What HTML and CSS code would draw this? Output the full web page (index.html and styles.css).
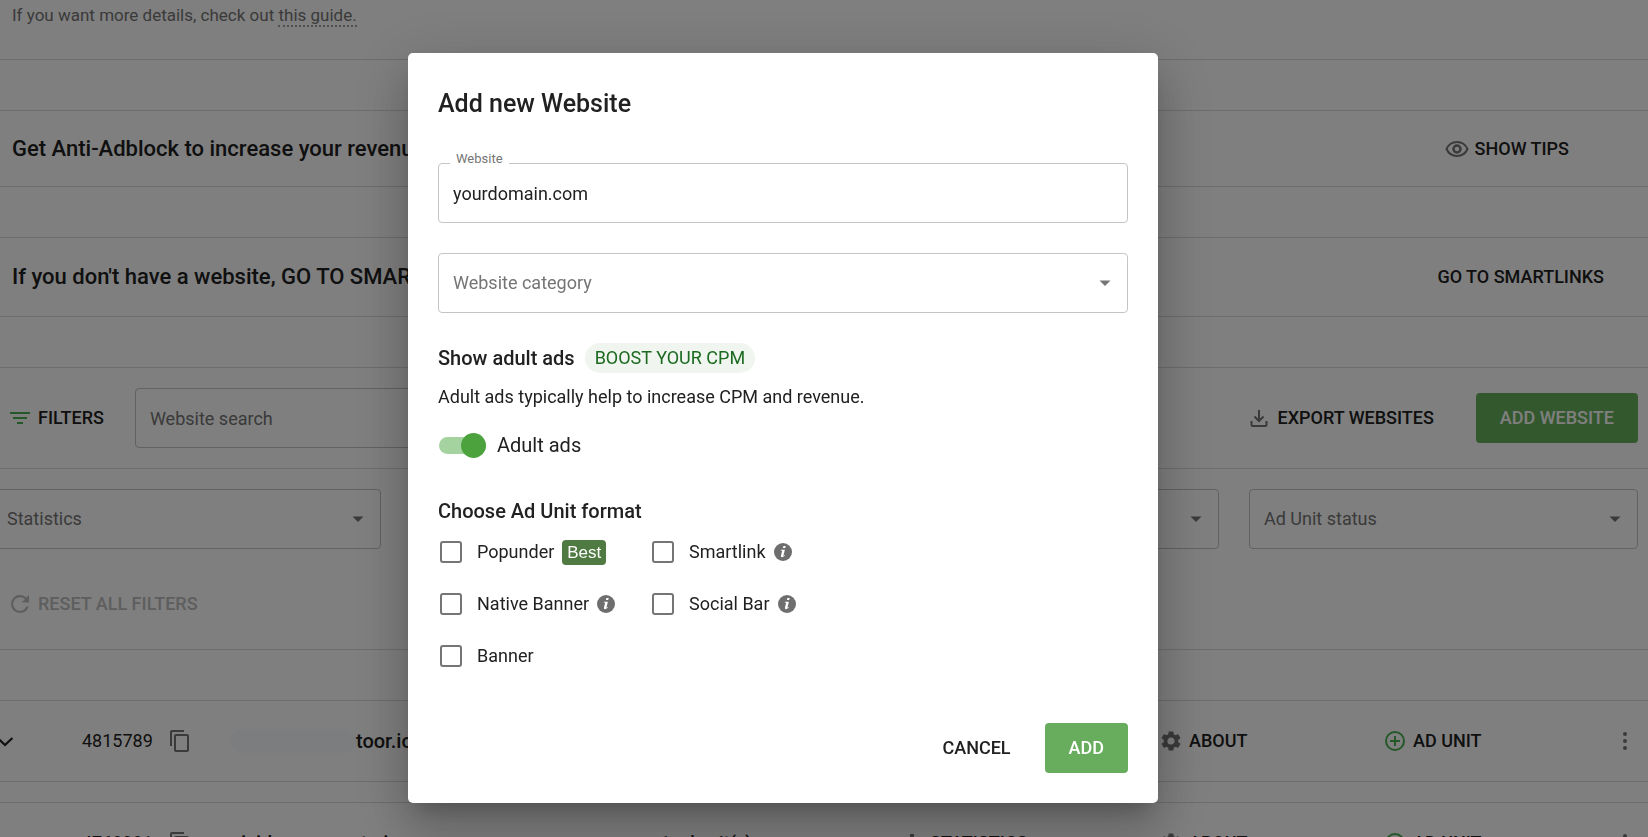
FILE: index.html
```html
<!DOCTYPE html>
<html lang="en">
<head>
  <meta charset="UTF-8" />
  <meta name="viewport" content="width=device-width, initial-scale=1.0"/>
  <title>Websites</title>
  <link rel="stylesheet" href="styles.css">
</head>
<body>
  <!-- shared icons -->
  <svg class="sprite" aria-hidden="true">
    <symbol id="arrow" viewBox="0 0 24 24"><path d="M6.500 9.500l5.500 5.500 5.500-5.500z"/></symbol>
    <symbol id="copy" viewBox="0 0 24 24"><path d="M16 1H4a2 2 0 0 0-2 2v14h2V3h12V1zm3 4H8a2 2 0 0 0-2 2v14a2 2 0 0 0 2 2h11a2 2 0 0 0 2-2V7a2 2 0 0 0-2-2zm0 16H8V7h11v14z"/></symbol>
    <symbol id="gear" viewBox="0 0 24 24"><path d="M19.14 12.94c.04-.3.06-.61.06-.94 0-.32-.02-.64-.07-.94l2.03-1.58a.49.49 0 0 0 .12-.61l-1.92-3.32a.488.488 0 0 0-.59-.22l-2.39.96c-.5-.38-1.03-.7-1.62-.94l-.36-2.54a.484.484 0 0 0-.48-.41h-3.84c-.24 0-.43.17-.47.41l-.36 2.54c-.59.24-1.13.57-1.62.94l-2.39-.96c-.22-.08-.47 0-.59.22L2.74 8.87c-.12.21-.08.47.12.61l2.03 1.58c-.05.3-.09.63-.09.94s.02.64.07.94l-2.03 1.58a.49.49 0 0 0-.12.61l1.92 3.32c.12.22.37.29.59.22l2.39-.96c.5.38 1.03.7 1.62.94l.36 2.54c.05.24.24.41.48.41h3.84c.24 0 .44-.17.47-.41l.36-2.54c.59-.24 1.13-.56 1.62-.94l2.39.96c.22.08.47 0 .59-.22l1.92-3.32c.12-.22.07-.47-.12-.61l-2.01-1.58zM12 15.6A3.61 3.61 0 0 1 8.4 12c0-1.98 1.62-3.6 3.6-3.6s3.6 1.62 3.6 3.6-1.62 3.6-3.6 3.6z"/></symbol>
    <symbol id="plus" viewBox="0 0 24 24"><path d="M13 7h-2v4H7v2h4v4h2v-4h4v-2h-4V7zm-1-5a10 10 0 1 0 0 20 10 10 0 0 0 0-20zm0 18a8 8 0 1 1 0-16 8 8 0 0 1 0 16z"/></symbol>
    <symbol id="dots" viewBox="0 0 24 24"><circle cx="12" cy="5" r="2"/><circle cx="12" cy="12" r="2"/><circle cx="12" cy="19" r="2"/></symbol>
    <symbol id="chevron" viewBox="0 0 24 24"><path d="M6.300 8.200L13 14.500l6.700-6.300 1.500 1.600-8.200 7.800-8.200-7.800z"/></symbol>
    <symbol id="bars" viewBox="0 0 24 24"><path d="M4 10h4v11H4zM10 3h4v18h-4zM16 13h4v8h-4z"/></symbol>
    <symbol id="info" viewBox="0 0 18 18"><circle cx="9" cy="9" r="9"/><path class="mark" d="M9.4 2.9h2.3l-.5 2.2H8.9zM6.9 6.7h4l-1.4 5.6c-.1.5.3.5 1.2-.2l.3.5c-1.3 1.5-4.6 2.6-4-.1l1.1-4.4c.1-.5-.2-.6-1.4-.7z"/></symbol>
  </svg>

  <main class="page">
    <section class="panel intro">
      <p>If you want more details, check out <a href="#guide">this guide.</a></p>
    </section>

    <section class="panel banner">
      <h2>Get Anti-Adblock to increase your revenue</h2>
      <button class="text-btn tips" type="button">
        <svg class="icon" viewBox="0 0 24 24" fill="none" stroke="currentColor" stroke-width="2"><path d="M1.500 12C3.500 7.500 7.500 5 12 5s8.500 2.500 10.500 7c-2 4.500-6 7-10.500 7S3.500 16.500 1.500 12z"/><circle cx="12" cy="12" r="3.500" stroke-width="2.500"/></svg>
        SHOW TIPS
      </button>
    </section>

    <section class="panel banner smart">
      <h2>If you don't have a website, GO TO SMARTLINKS</h2>
      <a class="text-btn" href="#smartlinks">GO TO SMARTLINKS</a>
    </section>

    <section class="panel">
      <div class="toolbar">
        <button class="text-btn" type="button">
          <svg class="icon green" viewBox="0 0 24 24"><path d="M2 6h20v2H2zM5 11h14v2H5zM9 16h6v2H9z"/></svg>
          FILTERS
        </button>
        <input class="field search" type="text" placeholder="Website search" aria-label="Website search">
        <button class="text-btn export" type="button">
          <svg class="icon" viewBox="0 0 24 24" fill="none" stroke="currentColor" stroke-width="2"><path d="M12 4v11M7.500 10.500l4.500 4.500 4.500-4.500M4.500 15v3.500q0 1.500 1.500 1.500h12q1.500 0 1.500-1.500V15"/></svg>
          EXPORT WEBSITES
        </button>
        <button class="green-btn" type="button">ADD WEBSITE</button>
      </div>
      <div class="filters">
        <div class="select">
          <select class="field" aria-label="Statistics"><option>Statistics</option></select>
          <svg class="icon"><use href="#arrow"/></svg>
        </div>
        <div class="select">
          <select class="field" aria-label="Website status"><option>Website status</option></select>
          <svg class="icon"><use href="#arrow"/></svg>
        </div>
        <div class="select">
          <select class="field" aria-label="Website category"><option>Website category</option></select>
          <svg class="icon"><use href="#arrow"/></svg>
        </div>
        <div class="select">
          <select class="field" aria-label="Ad Unit status"><option>Ad Unit status</option></select>
          <svg class="icon"><use href="#arrow"/></svg>
        </div>
      </div>
      <button class="text-btn reset" type="button" disabled>
        <svg class="icon" viewBox="0 0 24 24"><path d="M18.400 5.600A9 9 0 1 0 20.700 14.500h-2.400A6.800 6.800 0 1 1 16.800 7.200L13.500 10.500H21V3z"/></svg>
        RESET ALL FILTERS
      </button>
    </section>

    <table class="sites">
      <colgroup>
        <col class="c-open"><col class="c-id"><col class="c-name"><col class="c-units"><col class="c-stats"><col class="c-about"><col class="c-add"><col class="c-more">
      </colgroup>
      <tbody>
        <tr>
          <td><button class="text-btn" type="button" aria-label="Expand"><svg class="icon dark"><use href="#chevron"/></svg></button></td>
          <td><div class="site-id">4815789 <button class="text-btn" type="button" aria-label="Copy"><svg class="icon"><use href="#copy"/></svg></button></div></td>
          <td><div class="site-name"><span class="smudge"></span>toor.io</div></td>
          <td></td>
          <td></td>
          <td><button class="text-btn" type="button"><svg class="icon"><use href="#gear"/></svg>ABOUT</button></td>
          <td><button class="text-btn" type="button"><svg class="icon green"><use href="#plus"/></svg>AD UNIT</button></td>
          <td><button class="text-btn" type="button" aria-label="More"><svg class="icon"><use href="#dots"/></svg></button></td>
        </tr>
        <tr class="gap"><td colspan="8"></td></tr>
        <tr>
          <td><button class="text-btn" type="button" aria-label="Expand"><svg class="icon dark"><use href="#chevron"/></svg></button></td>
          <td><div class="site-id">4768981 <button class="text-btn" type="button" aria-label="Copy"><svg class="icon"><use href="#copy"/></svg></button></div></td>
          <td><div class="site-name">vividmovements.io</div></td>
          <td class="units">1 ad unit(s)</td>
          <td><button class="text-btn" type="button"><svg class="icon"><use href="#bars"/></svg>STATISTICS</button></td>
          <td><button class="text-btn" type="button"><svg class="icon"><use href="#gear"/></svg>ABOUT</button></td>
          <td><button class="text-btn" type="button"><svg class="icon green"><use href="#plus"/></svg>AD UNIT</button></td>
          <td><button class="text-btn" type="button" aria-label="More"><svg class="icon"><use href="#dots"/></svg></button></td>
        </tr>
      </tbody>
    </table>
  </main>

  <div class="overlay">
    <form class="modal" role="dialog" aria-labelledby="modalTitle">
      <h1 id="modalTitle">Add new Website</h1>

      <div class="input-box">
        <label for="website">Website</label>
        <input class="field" id="website" type="text" value="yourdomain.com">
      </div>

      <div class="select">
        <select class="field" aria-label="Website category"><option>Website category</option></select>
        <svg class="icon"><use href="#arrow"/></svg>
      </div>

      <div class="adult-head">
        <h3>Show adult ads</h3>
        <span class="chip">BOOST YOUR CPM</span>
      </div>
      <p>Adult ads typically help to increase CPM and revenue.</p>
      <label class="switch"><input type="checkbox" checked>Adult ads</label>

      <h3>Choose Ad Unit format</h3>
      <div class="formats">
        <div class="format"><label><input type="checkbox">Popunder</label><span class="best">Best</span></div>
        <div class="format"><label><input type="checkbox">Smartlink</label><svg class="info"><use href="#info"/></svg></div>
        <div class="format"><label><input type="checkbox">Native Banner</label><svg class="info"><use href="#info"/></svg></div>
        <div class="format"><label><input type="checkbox">Social Bar</label><svg class="info"><use href="#info"/></svg></div>
        <div class="format"><label><input type="checkbox">Banner</label></div>
      </div>

      <div class="actions">
        <button class="text-btn" type="button">CANCEL</button>
        <button class="green-btn" type="submit">ADD</button>
      </div>
    </form>
  </div>
</body>
</html>
```

FILE: styles.css
```css
* {
  box-sizing: border-box;
}

body {
  margin: 0;
  height: 100vh;
  overflow: hidden;
  background: #fff;
  color: #212121;
  font-family: Roboto, sans-serif;
  font-size: 18px;
  line-height: 26px;
}

h1, h2, h3, p {
  margin: 0;
  font-weight: 500;
}

p {
  font-weight: 400;
}

button, input, select {
  font: inherit;
  color: inherit;
}

.sprite {
  position: absolute;
  width: 0;
  height: 0;
}

.icon {
  flex: none;
  width: 24px;
  height: 24px;
  color: #757575;
  fill: #757575;
}

.icon[fill="none"] {
  fill: none;
}

.icon.green {
  fill: #4caf50;
}

.icon.dark {
  fill: #212121;
}

/* page behind the dialog */
.page {
  height: 100vh;
  overflow: hidden;
}

.panel {
  margin-bottom: 50px;
  border: solid #dadada;
  border-width: 1px 0;
}

.intro {
  height: 60px;
  border-top: none;
  padding: 2px 12px;
  color: #757575;
}

.intro p {
  font-size: 17px;
}

.intro a {
  color: inherit;
  text-decoration: none;
  border-bottom: 2px dotted #a0a0a0;
}

.banner {
  display: flex;
  align-items: center;
  justify-content: space-between;
  min-height: 77px;
  padding: 0 44px 0 12px;
}

.banner.smart {
  min-height: 80px;
}

.banner h2 {
  font-size: 22px;
}

.tips {
  margin-right: 35px;
}

.text-btn, .green-btn {
  display: inline-flex;
  align-items: center;
  gap: 6px;
  padding: 0;
  border: none;
  background: none;
  font-weight: 500;
  color: #212121;
  text-decoration: none;
  white-space: nowrap;
  cursor: pointer;
}

.green-btn {
  height: 50px;
  padding: 0 24px;
  border-radius: 4px;
  background: #68ad5e;
  color: #fff;
}

.toolbar {
  display: flex;
  align-items: center;
  padding: 20px 10px 20px 8px;
  border-bottom: 1px solid #dadada;
}

.toolbar .search {
  flex: 1;
  margin: 0 92px 0 31px;
}

.toolbar .export {
  margin-right: 42px;
}

.toolbar .green-btn {
  background: #66b05a;
}

.field {
  display: block;
  width: 100%;
  height: 60px;
  padding: 0 14px;
  border: 1px solid #c4c4c4;
  border-radius: 4px;
  background: none;
  outline: none;
}

.field::placeholder {
  color: #757575;
  opacity: 1;
}

.select {
  position: relative;
}

.select .field {
  appearance: none;
  color: #757575;
}

.select .icon {
  position: absolute;
  top: 18px;
  right: 11px;
  pointer-events: none;
}

/* first filter runs past the left edge of the window */
.filters {
  display: grid;
  grid-template-columns: repeat(4, 1fr);
  gap: 30px;
  margin: 20px 10px 30px -8px;
}

.reset {
  height: 50px;
  margin: 0 8px 20px;
}

.reset:disabled, .reset:disabled .icon {
  color: #bdbdbd;
  fill: #bdbdbd;
}

.sites {
  width: 100%;
  table-layout: fixed;
  border-collapse: collapse;
}

.sites td {
  height: 81px;
  padding: 0;
  border: solid #dadada;
  border-width: 1px 0;
  white-space: nowrap;
}

.sites .gap td {
  height: 21px;
}

.c-open { width: 82px; }
.c-id { width: 149px; }
.c-name { width: 429px; }
.c-units { width: 240px; }
.c-stats { width: 259px; }
.c-about { width: 224px; }
.c-add { width: 230px; }

.sites td .text-btn {
  display: flex;
}

.sites td:first-child .text-btn {
  margin-left: -8px;
}

.site-id, .site-name {
  display: flex;
  align-items: center;
}

.site-id {
  gap: 15px;
}

.site-name {
  font-size: 20px;
  font-weight: 500;
}

.units {
  font-weight: 500;
}

.smudge {
  width: 125px;
  height: 24px;
  border-radius: 12px;
  background: #f8fafd;
}

/* dialog */
.overlay {
  position: fixed;
  inset: 0;
  display: flex;
  justify-content: center;
  align-items: flex-start;
  padding: 53px 82px 0 0;
  background: rgba(0,0,0,0.5);
}

.modal {
  width: 750px;
  padding: 30px;
  border-radius: 5px;
  background: #fff;
  box-shadow: 0 14px 19px -9px rgba(0,0,0,0.2), 0 30px 48px 4px rgba(0,0,0,0.14), 0 11px 58px 10px rgba(0,0,0,0.12);
}

.modal h1 {
  margin-bottom: 38px;
  font-size: 25px;
  line-height: 42px;
}

.modal h3 {
  font-size: 20px;
  line-height: 30px;
}

.input-box {
  position: relative;
  margin-bottom: 30px;
}

.input-box label {
  position: absolute;
  top: -12px;
  left: 12px;
  padding: 0 6px;
  background: #fff;
  color: #757575;
  font-size: 13px;
  line-height: 16px;
}

.adult-head {
  display: flex;
  gap: 10px;
  margin: 30px 0 11px;
}

.chip {
  padding: 0 10px;
  border-radius: 15px;
  background: #f0f5ef;
  color: #1b6a20;
  line-height: 30px;
}

.switch {
  display: flex;
  align-items: center;
  gap: 11px;
  height: 30px;
  margin: 20px 0 36px;
  font-size: 20px;
}

.switch input {
  appearance: none;
  display: flex;
  align-items: center;
  justify-content: flex-end;
  width: 47px;
  height: 17px;
  margin: 0 0 0 1px;
  border-radius: 9px;
  background: #a5d3a0;
}

.switch input::before {
  content: "";
  flex: none;
  width: 25px;
  height: 25px;
  border-radius: 50%;
  background: #4ca33e;
}

.formats {
  display: grid;
  grid-template-columns: 212px 1fr;
}

.format {
  display: flex;
  align-items: center;
  gap: 8px;
  height: 52px;
}

.format label {
  display: flex;
  align-items: center;
  gap: 15px;
}

.format input {
  appearance: none;
  width: 22px;
  height: 22px;
  margin: 0 0 0 2px;
  border: 2px solid #757575;
  border-radius: 3px;
}

.best {
  padding: 0 5px;
  border-radius: 4px;
  background: #4f7a42;
  color: #fff;
  font-family: "Liberation Sans", Arial, sans-serif;
  font-size: 17px;
  line-height: 25px;
}

.info {
  width: 18px;
  height: 18px;
  fill: #6e6e6e;
}

.mark {
  fill: #fff;
}

.actions {
  display: flex;
  justify-content: flex-end;
  gap: 34px;
  margin-top: 41px;
}
```
